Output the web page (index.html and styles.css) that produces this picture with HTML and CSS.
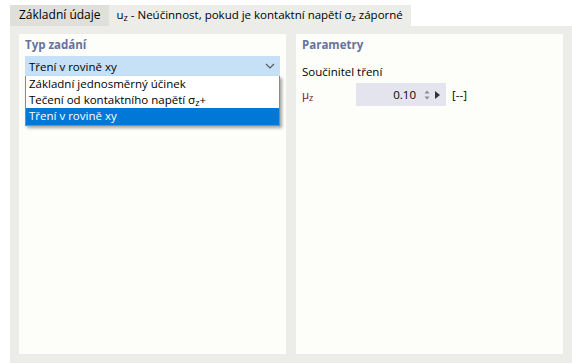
FILE: index.html
```html
<!DOCTYPE html>
<html lang="cs">

<head>
  <meta charset="UTF-8">
  <title>Typ zadání</title>
  <link rel="stylesheet" href="styles.css">
</head>

<body>
  <div class="tabs">
    <div class="tab">Základní údaje</div>
    <div class="tab active">u<sub>z</sub> - Neúčinnost, pokud je kontaktní napětí σ<sub>z</sub> záporné</div>
  </div>

  <div class="content">
    <div class="panel">
      <div class="panel-title">Typ zadání</div>
      <div class="combo">
        <div class="combo-box">
          <span>Tření v rovině xy</span>
          <svg class="chevron" width="10" height="6" viewBox="0 0 10 6">
            <path d="M1 1 L5 5 L9 1" fill="none" stroke="#555" stroke-width="1.1" />
          </svg>
        </div>
        <div class="combo-list">
          <div class="item">Základní jednosměrný účinek</div>
          <div class="item">Tečení od kontaktního napětí σ<sub>z</sub>+</div>
          <div class="item selected">Tření v rovině xy</div>
        </div>
      </div>
    </div>

    <div class="panel">
      <div class="panel-title">Parametry</div>
      <div class="group-label">Součinitel tření</div>
      <div class="param-row">
        <span class="symbol">μ<sub>z</sub></span>
        <div class="spin">
          <span class="value">0.10</span>
          <svg class="spin-arrows" width="6" height="12" viewBox="0 0 6 12">
            <path d="M0.5 4.5 L3 1.5 L5.5 4.5 Z" fill="#8c8c8c" />
            <path d="M0.5 7.5 L3 10.5 L5.5 7.5 Z" fill="#8c8c8c" />
          </svg>
          <svg class="spin-next" width="5" height="8" viewBox="0 0 5 8">
            <path d="M0 0 L5 4 L0 8 Z" fill="#333" />
          </svg>
        </div>
        <span class="unit">[--]</span>
      </div>
    </div>
  </div>
</body>

</html>
```

FILE: styles.css
```css
html,
body {
  margin: 0;
  height: 100%;
  background-color: white;
  font-family: "Open Sans", "Noto Sans", sans-serif;
  font-size: 11.5px;
  color: black;
  overflow: hidden;
}

sub {
  font-size: 9px;
  vertical-align: -2px;
  line-height: 0;
}

.tabs {
  display: flex;
  padding: 5px 0 0 10px;
}

.tab {
  height: 21px;
  line-height: 20px;
  padding: 0 8px 0 9px;
  background-color: #dfdfdb;
  white-space: nowrap;
  font-size: 12px;
}

.tab.active {
  background-color: #ecece8;
  padding: 0 8px 0 8px;
  font-size: 11.5px;
}

.content {
  margin-left: 10px;
  height: calc(100% - 26px);
  box-sizing: border-box;
  padding: 8px 9px 9px 9px;
  background-color: #ecece8;
  display: grid;
  grid-template-columns: 1fr 1fr;
  gap: 10px;
}

.panel {
  background-color: #fdfdf9;
  padding: 2px 6px;
}

.panel-title {
  color: #6672a0;
  font-weight: bold;
  height: 20px;
  line-height: 18px;
}

.combo {
  position: relative;
}

.combo-box {
  height: 20px;
  background-color: #c6e1f7;
  display: flex;
  align-items: center;
  justify-content: space-between;
  padding: 0 4px;
}

.chevron {
  margin-right: 1px;
}

.combo-list {
  position: absolute;
  top: 20px;
  left: 0;
  right: 0;
  background-color: white;
  border: 1px solid #8a8a8a;
  border-top: none;
  box-shadow: 2px 2px 3px rgba(0, 0, 0, 0.35);
}

.item {
  height: 16px;
  line-height: 16px;
  padding: 0 3px;
  white-space: nowrap;
}

.item.selected {
  background-color: #0078d7;
  color: white;
  height: 17px;
}

.group-label {
  margin-top: 7px;
  height: 18px;
  line-height: 18px;
}

.param-row {
  display: flex;
  align-items: center;
  margin-top: 2px;
  height: 23px;
}

.symbol {
  color: #7a1010;
  width: 54px;
}

.spin {
  width: 90px;
  height: 23px;
  background-color: #e4e4ee;
  display: flex;
  align-items: center;
  justify-content: flex-end;
  gap: 5px;
  padding-right: 6px;
  box-sizing: border-box;
}

.value {
  margin-right: 3px;
}

.unit {
  margin-left: 6px;
}
```
